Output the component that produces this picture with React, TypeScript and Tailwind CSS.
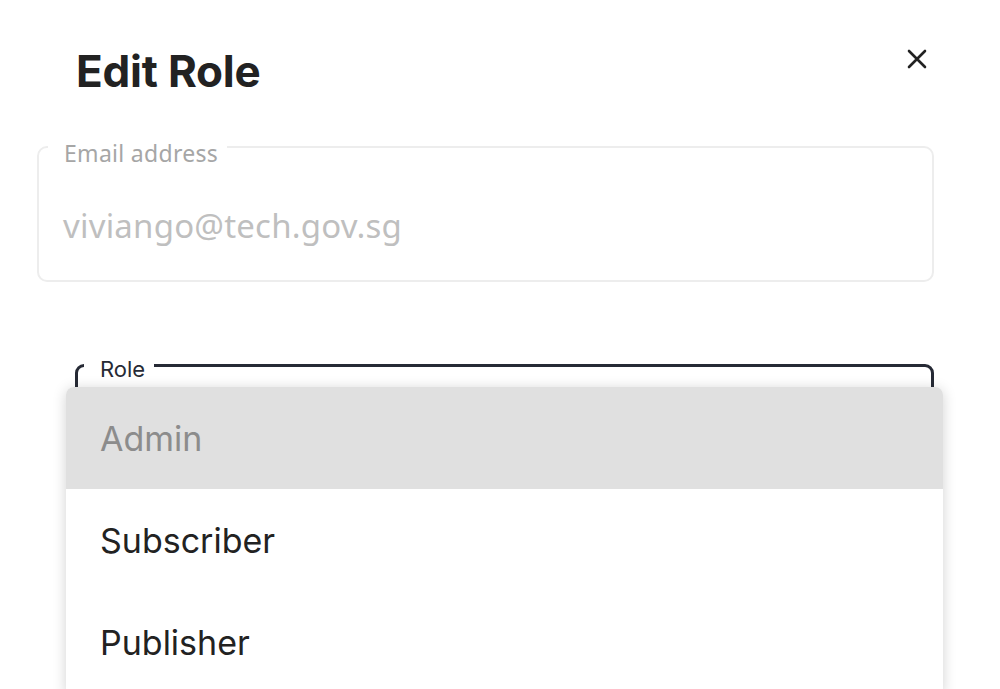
import React from "react";

const roles = ["Admin", "Subscriber", "Publisher"];

const App = () => {
  return (
    <div className="relative h-[689px] w-[1000px] overflow-hidden bg-white font-['Inter',sans-serif] text-[#222222]">
      {/* Header */}
      <div className="flex items-start justify-between pl-[76px] pr-[73px] pt-[49px]">
        <h1 className="text-[44px] font-bold leading-none tracking-[-0.2px]">Edit Role</h1>
        <button aria-label="Close" className="block">
          <svg width="20" height="20" viewBox="0 0 20 20" fill="none">
            <path d="M2 2L18 18M18 2L2 18" stroke="#222222" strokeWidth="2.6" strokeLinecap="round" />
          </svg>
        </button>
      </div>

      {/* Email field (disabled) */}
      <div className="relative ml-[37px] mr-[66px] mt-[53px] h-[136px] rounded-[10px] border-2 border-[#ededed] pl-6 pt-[61px]">
        <span className="absolute left-[9px] top-[-6px] bg-white pl-4 pr-[9px] font-['Noto_Sans',sans-serif] text-[23px] leading-none tracking-[0.3px] text-[#a6a6a6]">
          Email address
        </span>
        <div className="font-['Noto_Sans',sans-serif] text-[33px] leading-none tracking-[0.2px] text-[#bfbfbf]">
          viviango@tech.gov.sg
        </div>
      </div>

      {/* Role select */}
      <div className="relative ml-[75px] mr-[66px] mt-[82px] h-[136px] rounded-[9px] border-[3px] border-[#262a35]">
        <span className="absolute left-[6px] top-[-9px] bg-white pl-4 pr-[9px] text-[22px] leading-none text-[#262a35]">
          Role
        </span>
      </div>

      {/* Dropdown menu */}
      <ul className="absolute left-[66px] top-[387px] w-[877px] overflow-hidden rounded-t-[8px] bg-white shadow-[0_2px_14px_rgba(0,0,0,0.18)]">
        {roles.map((role, i) => (
          <li
            key={role}
            className={
              i === 0
                ? "flex h-[102px] items-center bg-[#e0e0e0] pl-[34px] text-[34px] text-[#8c8c8c]"
                : "flex h-[102px] items-center pl-[34px] text-[34px] text-[#222222]"
            }
          >
            {role}
          </li>
        ))}
      </ul>
    </div>
  );
};

export default App;
